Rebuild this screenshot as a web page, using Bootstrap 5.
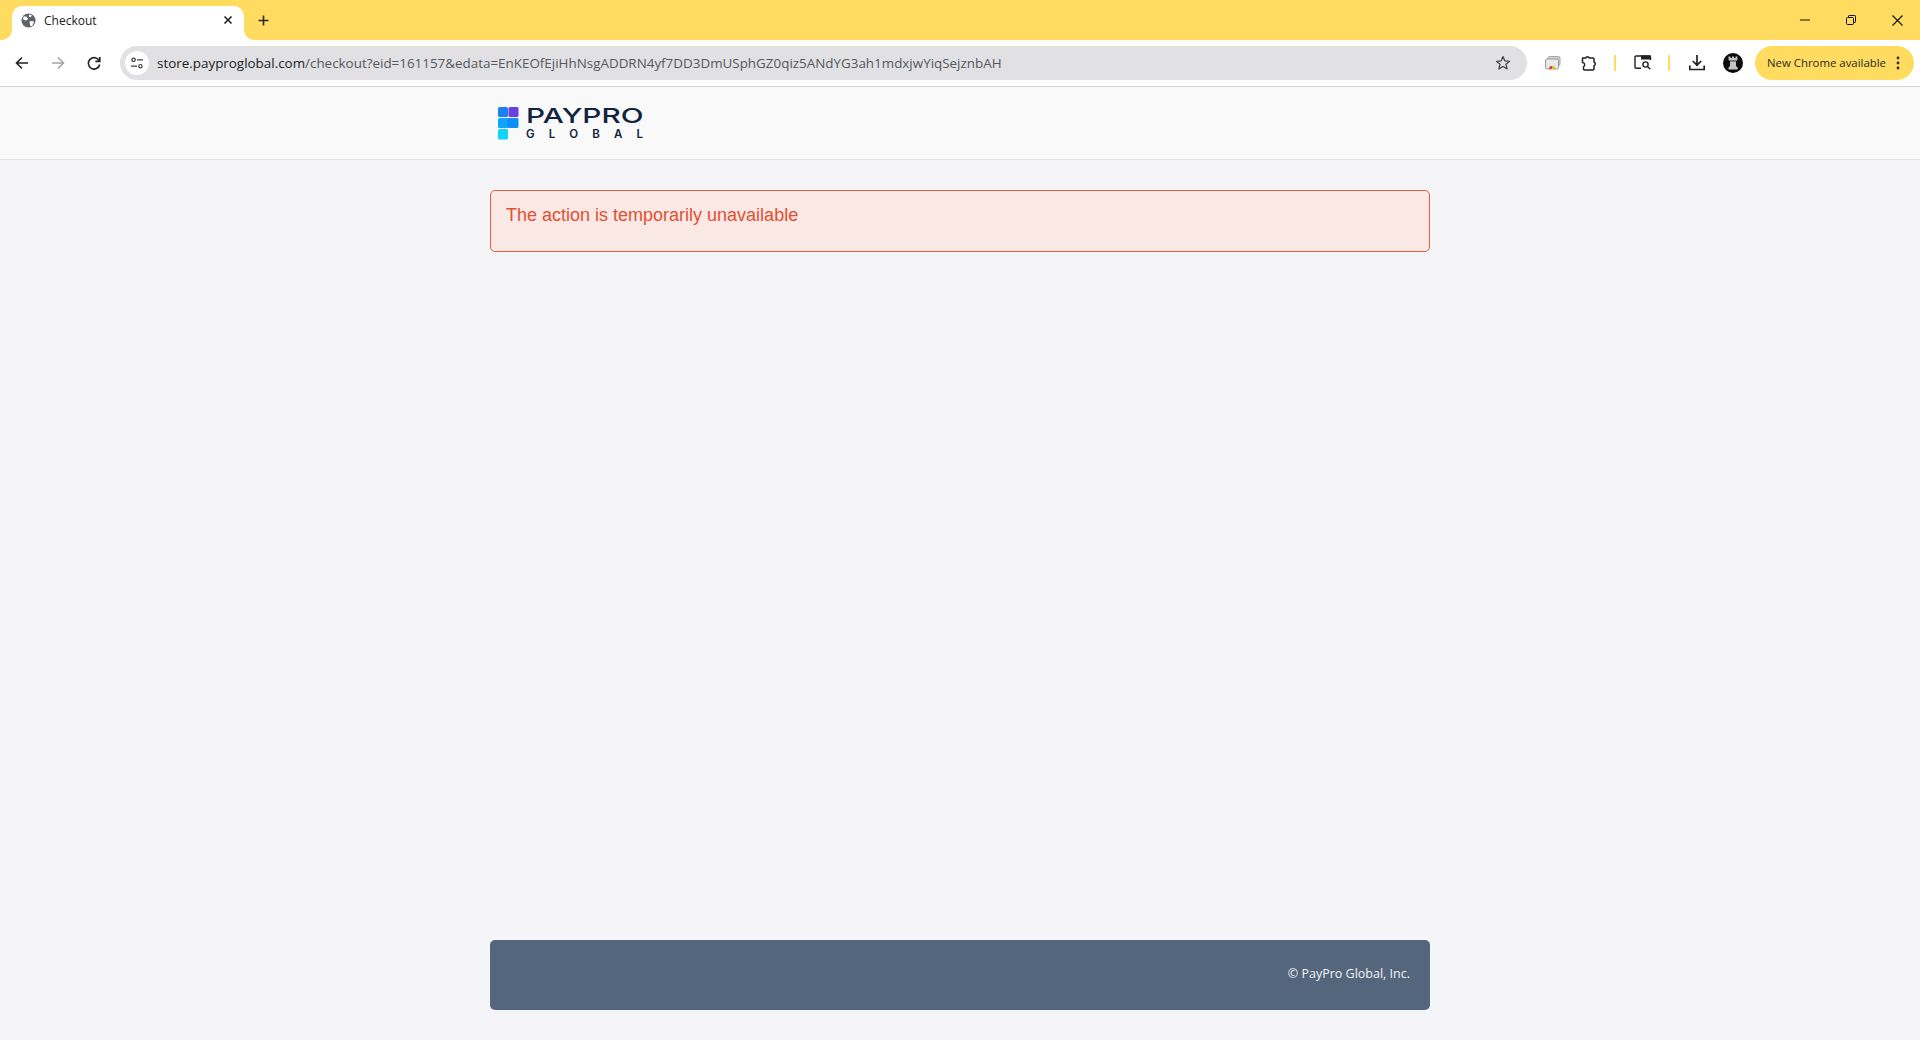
<!DOCTYPE html>
<html lang="en">
<head>
<meta charset="utf-8">
<title>Checkout</title>
<link href="https://cdn.jsdelivr.net/npm/bootstrap@5.3.0/dist/css/bootstrap.min.css" rel="stylesheet">
<style>
html,body{height:100%;}
body{background:#f5f5f8;font-family:"Liberation Sans",Arial,sans-serif;overflow:hidden;}
.shell{height:1040px;}
.tabstrip{height:40px;background:#ffdc5f;}
.tab-active{width:232px;height:34px;margin-left:12px;background:#fff;border-radius:10px 10px 0 0;position:relative;font:12px "Open Sans",sans-serif;color:#202124;padding:0 11px 6px 9px;}
.tab-active::before,.tab-active::after{content:"";position:absolute;bottom:0;width:10px;height:10px;}
.tab-active::before{left:-10px;background:radial-gradient(circle at 0 0,#ffdc5f 9.5px,#fff 10px);}
.tab-active::after{right:-10px;background:radial-gradient(circle at 100% 0,#ffdc5f 9.5px,#fff 10px);}
.tab-title{margin-left:8px;}
.newtab{margin-left:5px;width:28px;height:28px;margin-bottom:6px;}
.winbtn{width:46px;height:40px;}
.toolbar{height:47px;background:#fff;border-bottom:1px solid #d4d4d6;padding:0 6px 1px 4px;}
.slot{width:36px;height:36px;flex:none;}
.omni{height:34px;background:#e1e1e3;border-radius:17px;margin:0 8px;padding:0 12px 0 5px;min-width:0;}
.site-chip{width:24px;height:24px;border-radius:50%;background:#fff;flex:none;}
.url{margin-left:8px;font:13.42px "Open Sans",sans-serif;color:#55585c;white-space:nowrap;}
.url-host{color:#202124;}
.star-slot{margin-left:auto;width:24px;height:24px;}
.vsep{width:2px;height:16px;background:#ffdc5f;flex:none;margin:0 9px 0 7px;}
.update-pill{width:159px;height:34px;margin-left:4px;background:#ffdc5f;border-radius:17px;font:11.4px "Open Sans",sans-serif;color:#2b2a26;padding:0 14px 0 12px;white-space:nowrap;flex:none;}
.site-head{height:73px;background:#f9f9f9;border-bottom:1px solid #e2e2e5;}
.page-col{width:940px;}
.brand{padding-left:8px;padding-top:20px;height:72px;}
.brand-words{margin-left:7px;color:#10243f;}
.brand-top{font:500 20.5px/17px Inter,"Liberation Sans",sans-serif;transform:scaleX(1.45);transform-origin:0 50%;white-space:nowrap;}
.brand-bot{font:600 11.5px/10px Inter,"Liberation Sans",sans-serif;letter-spacing:14.2px;margin-top:5px;white-space:nowrap;}
.err-box{height:62px;margin-top:30px;background:#f9e8e4;border:1px solid #e25f40;border-radius:5px;color:#e34f30;font-size:18px;line-height:24px;padding:12px 15px;}
.site-foot{height:70px;margin-bottom:30px;background:#54667b;border-radius:5px;color:#f3f4f6;font:12.5px "Open Sans",sans-serif;padding:0 20px 3px;}
</style>
</head>
<body>
<div class="shell d-flex flex-column">
  <div class="tabstrip d-flex align-items-end flex-none">
    <div class="tab-active d-flex align-items-center">
      <svg width="15" height="15" viewBox="0 0 16 16"><circle cx="8" cy="8" r="7.5" fill="#5f6368"/><path d="M3 3.5l3 .5 1.5 2-1 1.5-2 .5-2.5-1.5zM9 9l3.5-.5 1.5 1-2 4-2 .5-.5-2.5zM8.5 1.5l3 1-1 2-2-.5z" fill="#fff"/></svg>
      <span class="tab-title">Checkout</span>
      <svg class="ms-auto" width="10" height="10" viewBox="0 0 10 10"><path d="M1.5 1.5l7 7M8.5 1.5l-7 7" stroke="#202124" stroke-width="1.6"/></svg>
    </div>
    <div class="newtab d-flex align-items-center justify-content-center">
      <svg width="11" height="11" viewBox="0 0 11 11"><path d="M5.5.5v10M.5 5.5h10" stroke="#2b2a26" stroke-width="1.6"/></svg>
    </div>
    <div class="ms-auto d-flex align-self-stretch">
      <div class="winbtn d-flex align-items-center justify-content-center"><svg width="10" height="10" viewBox="0 0 10 10"><path d="M0 5h10" stroke="#111" stroke-width="1"/></svg></div>
      <div class="winbtn d-flex align-items-center justify-content-center"><svg width="10" height="10" viewBox="0 0 10 10" fill="none" stroke="#111"><rect x=".5" y="2.5" width="7" height="7" rx="1"/><path d="M2.5 2.5V1.2q0-.7.7-.7h5.6q.7 0 .7.7v5.6q0 .7-.7.7H7.5"/></svg></div>
      <div class="winbtn d-flex align-items-center justify-content-center"><svg width="11" height="11" viewBox="0 0 11 11"><path d="M.5.5l10 10M10.5.5l-10 10" stroke="#111" stroke-width="1.1"/></svg></div>
    </div>
  </div>
  <div class="toolbar d-flex align-items-center">
    <div class="slot d-flex align-items-center justify-content-center"><svg width="14" height="14" viewBox="0 0 14 14" fill="none" stroke="#202124" stroke-width="1.6"><path d="M13 7H1.5M7 1.5L1.5 7 7 12.5"/></svg></div>
    <div class="slot d-flex align-items-center justify-content-center"><svg width="14" height="14" viewBox="0 0 14 14" fill="none" stroke="#a4a5a7" stroke-width="1.6"><path d="M1 7h11.5M7 1.5L12.5 7 7 12.5"/></svg></div>
    <div class="slot d-flex align-items-center justify-content-center"><svg width="14" height="14" viewBox="0 0 14 14" fill="none" stroke="#202124" stroke-width="1.6"><path d="M12.3 5A5.7 5.7 0 1 0 12.7 8.5"/><path d="M12.8 1v4.4H8.4"/></svg></div>
    <div class="omni flex-grow-1 d-flex align-items-center">
      <div class="site-chip d-flex align-items-center justify-content-center"><svg width="14" height="14" viewBox="0 0 14 14" fill="none" stroke="#3c4043" stroke-width="1.2"><circle cx="3.6" cy="3.8" r="1.7"/><path d="M7 3.8h6M1 10.2h6"/><circle cx="10.4" cy="10.2" r="1.7"/></svg></div>
      <span class="url"><span class="url-host">store.payproglobal.com</span>/checkout?eid=161157&amp;edata=EnKEOfEjiHhNsgADDRN4yf7DD3DmUSphGZ0qiz5ANdYG3ah1mdxjwYiqSejznbAH</span>
      <div class="star-slot d-flex align-items-center justify-content-center"><svg width="16" height="16" viewBox="0 0 16 16" fill="none" stroke="#44474a" stroke-width="1.3" stroke-linejoin="round"><path d="M8 1.6l1.9 4.3 4.6.4-3.5 3 1.1 4.6L8 11.5l-4.1 2.4L5 9.3l-3.5-3 4.6-.4z"/></svg></div>
    </div>
    <div class="slot d-flex align-items-center justify-content-center"><svg width="16" height="14" viewBox="0 0 16 14"><rect x="3" y="0.5" width="12" height="9" rx="1.5" fill="#d0d0d2" stroke="#a9a9ab"/><rect x="0.5" y="3" width="13" height="10" rx="1.5" fill="#e9e9ea" stroke="#9a9a9c"/><path d="M4 13a3 3 0 0 1 6 0z" fill="#34a853"/><path d="M4 13a3 3 0 0 1 3-3v3z" fill="#ea4335"/><path d="M7 10a3 3 0 0 1 3 3H7z" fill="#fbbc04"/></svg></div>
    <div class="slot d-flex align-items-center justify-content-center"><svg width="16" height="18" viewBox="0 0 16 18" fill="none" stroke="#202124" stroke-width="1.5" stroke-linejoin="round"><path d="M1.5 4h3.2a1.9 1.9 0 0 1 3.6 0h3.7a1 1 0 0 1 1 1v3a1.9 1.9 0 0 1 0 3.6V15a1 1 0 0 1-1 1H3.5a1 1 0 0 1-1-1v-2.2a2.3 2.3 0 0 0-1-4.3z"/></svg></div>
    <div class="vsep"></div>
    <div class="slot d-flex align-items-center justify-content-center"><svg width="18" height="15" viewBox="0 0 18 15" fill="none" stroke="#202124" stroke-width="1.4"><path d="M7 13.3H2a1 1 0 0 1-1-1V2a1 1 0 0 1 1-1h13.5a1 1 0 0 1 1 1v3"/><rect x="7" y="0.5" width="10" height="4" fill="#202124" stroke="none"/><circle cx="11.5" cy="9.5" r="2.6"/><path d="M13.5 11.5l2.8 2.8"/></svg></div>
    <div class="vsep"></div>
    <div class="slot d-flex align-items-center justify-content-center"><svg width="16" height="16" viewBox="0 0 16 16" fill="none" stroke="#202124" stroke-width="1.7"><path d="M8 0v10M3.8 6L8 10.2 12.2 6M.8 10.5v4h14.4v-4"/></svg></div>
    <div class="slot d-flex align-items-center justify-content-center"><svg width="20" height="20" viewBox="0 0 20 20"><circle cx="10" cy="10" r="10" fill="#0b0b0b"/><path d="M5.5 3.5h2v1.5h1.5V3.5h2v1.5h1.5V3.5h2v3.3L13 8v5l1.7 1.4v2.1H5.5v-2.1L7 13V8L5.5 6.8z" fill="#c4c4c6"/><path d="M7 8h6" stroke="#0b0b0b" stroke-width=".8"/></svg></div>
    <div class="update-pill d-flex align-items-center">
      <span>New Chrome available</span>
      <svg class="ms-auto" width="4" height="14" viewBox="0 0 4 14" fill="#2b2a26"><circle cx="2" cy="2" r="1.4"/><circle cx="2" cy="7" r="1.4"/><circle cx="2" cy="12" r="1.4"/></svg>
    </div>
  </div>
  <header class="site-head">
    <div class="page-col mx-auto brand d-flex align-items-start">
      <svg width="21" height="33" viewBox="0 0 21 33" class="flex-none">
        <rect x="0" y="0" width="10" height="10" rx="1.5" fill="#1a80f5"/>
        <rect x="10.5" y="0" width="10" height="10" rx="1.5" fill="#6a3fe4"/>
        <rect x="0" y="11" width="10" height="10" rx="1.5" fill="#0fa5f8"/>
        <rect x="9" y="11" width="11.5" height="10" rx="1.5" fill="#0e90f5"/>
        <rect x="0" y="22" width="10" height="10.5" rx="1.5" fill="#10d5fb"/>
      </svg>
      <div class="brand-words">
        <div class="brand-top">PAYPRO</div>
        <div class="brand-bot">GLOBAL</div>
      </div>
    </div>
  </header>
  <main class="page-col mx-auto flex-grow-1 d-flex flex-column">
    <div class="err-box">The action is temporarily unavailable</div>
    <footer class="site-foot mt-auto d-flex align-items-center justify-content-end">© PayPro Global, Inc.</footer>
  </main>
</div>
</body>
</html>
